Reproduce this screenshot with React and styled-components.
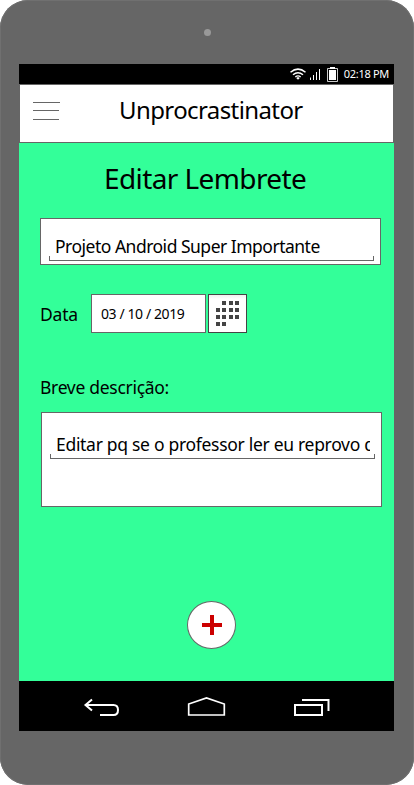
import React from "react";
import styled, { createGlobalStyle } from "styled-components";

const Global = createGlobalStyle`
  *, *::before, *::after { box-sizing: border-box; }
  body { margin: 0; background: #fff; font-family: "Noto Sans", "Open Sans", sans-serif; color: #000; }
`;

const Device = styled.div`
  width: 414px;
  height: 785px;
  padding: 0 20px 0 19px;
  display: flex;
  flex-direction: column;
  background: #666;
  border-radius: 28px;
  box-shadow: inset 0 0 0 1px #707070;
`;

const Bezel = styled.div`
  height: 64px;
  display: flex;
  justify-content: center;
  flex: none;
`;

const Camera = styled.i`
  width: 7px;
  height: 7px;
  margin: 29px 0 0 1px;
  border-radius: 50%;
  background: #999;
`;

const Text = styled.span`
  display: block;
  white-space: pre;
  font-size: ${(p) => p.$size}px;
  line-height: ${(p) => p.$line}px;
  letter-spacing: ${(p) => p.$track || 0}px;
  color: ${(p) => p.$color || "#000"};
`;

const StatusBar = styled.div`
  height: 20px;
  flex: none;
  display: flex;
  justify-content: flex-end;
  padding-right: 5px;
  background: #000;
`;

const Header = styled.header`
  height: 59px;
  flex: none;
  display: flex;
  align-items: flex-start;
  padding: 8px 0 0 13px;
  background: #fff;
  border: 1px solid #666;
`;

const Title = styled(Text).attrs({ as: "h1" })`
  margin: 0 0 0 59px;
  font-weight: 400;
`;

const MenuIcon = styled.svg`
  flex: none;
  margin-top: 9px;
`;

const Content = styled.main`
  height: 538px;
  flex: none;
  display: flex;
  flex-direction: column;
  align-items: flex-start;
  padding: 17px 0 0 21px;
  background: #3f9;
`;

const Heading = styled(Text).attrs({ as: "h2" })`
  margin: 0 0 0 64px;
  font-weight: 400;
`;

const Field = styled.div`
  width: 341px;
  height: ${(p) => p.$height}px;
  margin: ${(p) => p.$margin};
  padding: ${(p) => p.$top}px 6px 0 8px;
  border: 1px solid #666;
  background: #fff;
`;

const Value = styled.div`
  width: 314px;
  height: 24px;
  margin-left: 6px;
  overflow: hidden;
`;

const Bracket = styled.div`
  width: 325px;
  height: 5px;
  margin-top: ${(p) => p.$shift}px;
  border: 1px solid #666;
  border-top: 0;
`;

const DateRow = styled.div`
  height: 39px;
  margin-top: 29px;
  display: flex;
  align-items: flex-start;
`;

const DateLabel = styled(Text)`
  width: 51px;
  margin-top: 8px;
`;

const DateInput = styled.div`
  width: 115px;
  height: 39px;
  padding: 9px 0 0 9px;
  border: 1px solid #666;
  background: #fff;
`;

const DateButton = styled.button`
  width: 39px;
  height: 39px;
  margin-left: 2px;
  padding: 6px 0 0 7px;
  display: flex;
  align-items: flex-start;
  border: 1px solid #444;
  background: linear-gradient(#f0f0f0, #fff 4px);
`;

const Description = styled(Text)`
  margin-top: 42px;
`;

const AddButton = styled.button`
  width: 49px;
  height: 48px;
  margin: 94px 0 0 147px;
  padding: 0 0 0 1px;
  display: flex;
  align-items: center;
  justify-content: center;
  border: 1px solid #666;
  border-radius: 50%;
  background: #fff;
`;

const NavBar = styled.nav`
  height: 50px;
  flex: none;
  display: flex;
  align-items: flex-start;
  padding: 15px 0 0 64px;
  background: #000;
`;

const NavIcon = styled.svg`
  flex: none;
  margin-right: ${(p) => p.$gap || 0}px;
  fill: none;
  stroke: #fff;
  stroke-width: 2;
`;

const CALENDAR_ROWS = [
  [1, 2, 3],
  [0, 1, 2, 3],
  [0, 1, 2, 3],
  [0, 1],
];

const StatusIcons = () => (
  <svg width="54" height="20" viewBox="290 64 54 20" fill="none" stroke="#fff">
    <path d="M290.5 72.3Q298 66 305.5 72.3" strokeWidth="1.5" />
    <path d="M293 74.8Q298 70.6 303 74.8" strokeWidth="1.5" />
    <path d="M295.3 77Q298 74.8 300.7 77" strokeWidth="1.3" />
    <path d="M296.2 78L298 76.9L299.8 78L298 79.8Z" fill="#fff" stroke="none" />
    <path d="M310.5 77.5V80M313.5 75V80M316.5 72V80M319.5 69V80" />
    <path d="M327.5 68.5H337.5V81.5H327.5Z" strokeWidth=".8" />
    <path d="M330 67H335V69H330ZM329 70H336V80H329Z" fill="#fff" stroke="none" />
  </svg>
);

export default function App() {
  return (
    <>
      <Global />
      <Device>
        <Bezel>
          <Camera />
        </Bezel>
        <StatusBar>
          <StatusIcons />
          <Text $size={11} $line={20} $color="#fff" $track={-0.3}>02:18 PM</Text>
        </StatusBar>
        <Header>
          <MenuIcon width="27" height="18" stroke="#666">
            <path d="M0 .5H27M0 8.5H26M0 17.5H26" />
          </MenuIcon>
          <Title $size={24} $line={34} $track={-0.6}>Unprocrastinator</Title>
        </Header>
        <Content>
          <Heading $size={28} $line={36} $track={-0.6}>Editar Lembrete</Heading>
          <Field $height={47} $top={15} $margin="22px 0 0">
            <Value>
              <Text $size={17.5} $line={24} $track={-0.5}>Projeto Android Super Importante</Text>
            </Value>
            <Bracket $shift={-2} />
          </Field>
          <DateRow>
            <DateLabel $size={17.5} $line={24} $track={-0.2}>Data</DateLabel>
            <DateInput>
              <Text $size={14} $line={20} $track={-0.4}>03 / 10 / 2019</Text>
            </DateInput>
            <DateButton aria-label="Calendário">
              <svg width="24" height="26" fill="#444">
                {CALENDAR_ROWS.map((cols, row) =>
                  cols.map((col) => (
                    <rect key={`${row}-${col}`} x={[0, 6, 13, 19][col]} y={row * 7} width="4" height="4" />
                  ))
                )}
              </svg>
            </DateButton>
          </DateRow>
          <Description $size={17.5} $line={24} $track={-0.3}>Breve descrição:</Description>
          <Field $height={95} $top={19} $margin="13px 0 0 1px">
            <Value>
              <Text $size={17.5} $line={24} $track={-0.3}>Editar pq se o professor ler eu reprovo de novo</Text>
            </Value>
            <Bracket $shift={-2} />
          </Field>
          <AddButton aria-label="Adicionar">
            <svg width="20" height="20" fill="#c00">
              <path d="M8 0H12V8H20V12H12V20H8V12H0V8H8Z" />
            </svg>
          </AddButton>
        </Content>
        <NavBar>
          <NavIcon width="38" height="24" viewBox="83 696 38 24" $gap={66}>
            <path d="M92 699.5L85.5 705L92 710.5M86 705H113.5Q118 705 118 710Q118 715 113.5 715H100" />
          </NavIcon>
          <NavIcon width="39" height="24" viewBox="187 696 39 24" $gap={66}>
            <path d="M188.7 715V704L206.5 698L224.3 704V715Z" strokeWidth="1.7" />
          </NavIcon>
          <NavIcon width="40" height="24" viewBox="292 696 40 24">
            <path d="M295 705H322V715H295Z" />
            <path d="M302 700H328.5V711" />
          </NavIcon>
        </NavBar>
      </Device>
    </>
  );
}
